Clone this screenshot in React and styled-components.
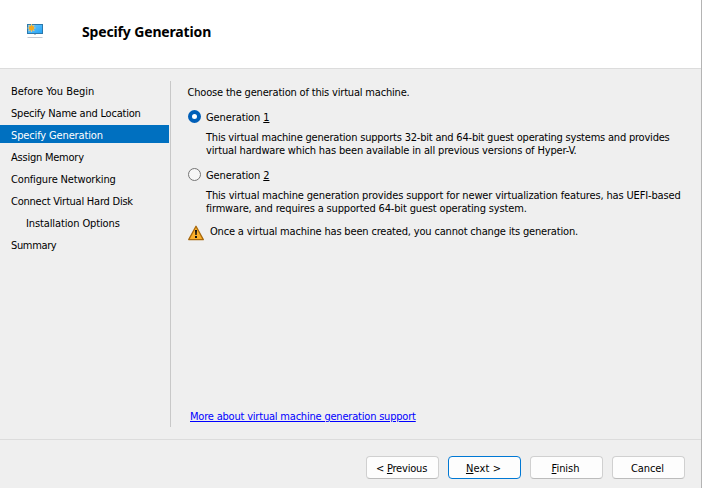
import React from "react";
import styled, { createGlobalStyle } from "styled-components";

const GlobalStyle = createGlobalStyle`
  *, *::before, *::after { box-sizing: border-box; }
  body {
    margin: 0;
    background: #efefef;
    color: #000;
    font-family: "DejaVu Sans Condensed", "Noto Sans", sans-serif;
    font-size: 11px;
    line-height: 13px;
  }
`;

const Wizard = styled.div`
  width: 702px;
  height: 488px;
  display: flex;
  flex-direction: column;
  background: #efefef;
  border-right: 1px solid #b4b4b4;
  overflow: hidden;
`;

const Header = styled.header`
  flex: none;
  height: 69px;
  display: flex;
  padding: 23px 0 0 27px;
  background: #fff;
  border-bottom: 1px solid #dcdcdc;
`;

const Title = styled.h1`
  margin: 0 0 0 38px;
  font-family: "Noto Sans", sans-serif;
  font-size: 14px;
  line-height: 18px;
  font-weight: 700;
  letter-spacing: -0.15px;
`;

const Body = styled.div`
  flex: none;
  height: 370px;
  display: flex;
  padding: 12px 0;
`;

const Sidebar = styled.nav`
  flex: none;
  width: 171px;
  height: 346px;
  display: flex;
  flex-direction: column;
  gap: 4px;
  padding-right: 1px;
  border-right: 1px solid #c8c8c8;
`;

const Step = styled.a`
  height: 18px;
  line-height: 22px;
  padding-left: ${(p) => (p.$nested ? 26 : 11)}px;
  white-space: nowrap;
  color: ${(p) => (p.$active ? "#fff" : "#000")};
  background: ${(p) => (p.$active ? "#0070c0" : "transparent")};
  letter-spacing: ${(p) => p.$track}px;
`;

const Content = styled.main`
  flex: 1;
  display: flex;
  flex-direction: column;
  align-items: flex-start;
  padding: 5px 0 0 17px;
`;

const Line = styled.span`
  display: block;
  white-space: nowrap;
  letter-spacing: ${(p) => p.$track}px;
`;

const Intro = styled(Line)`
  margin-left: -0.5px;
`;

const Option = styled.label`
  display: flex;
  align-items: flex-start;
  gap: 5px;
  margin-top: 11px;
`;

const Radio = styled.span`
  flex: none;
  width: 13px;
  height: 13px;
  border-radius: 50%;
  background: ${(p) => (p.$checked ? "#fff" : "#f6f6f6")};
  border: ${(p) => (p.$checked ? "4px solid #005fb8" : "1px solid #757575")};
`;

const OptionLabel = styled(Line)`
  margin-top: 1px;
`;

const Description = styled.p`
  margin: 7px 0 0 18px;
`;

const Notice = styled.div`
  display: flex;
  gap: 6px;
  margin-top: 10px;
`;

const Key = styled.span`
  text-decoration: underline;
  text-decoration-thickness: 1px;
  text-underline-offset: 1px;
`;

const HelpLink = styled.a`
  margin: auto 0 4px 2px;
  color: #0000ff;
  text-decoration: underline;
  text-decoration-thickness: 1px;
  text-underline-offset: 1px;
  letter-spacing: -0.2px;
  white-space: nowrap;
`;

const Footer = styled.footer`
  flex: 1;
  display: flex;
  justify-content: flex-end;
  gap: 9px;
  padding: 16px 16px 0 0;
  border-top: 1px solid #dcdcdc;
`;

const Button = styled.button`
  width: 73px;
  height: 23px;
  padding: 1px 2px 0 0;
  font: inherit;
  color: #000;
  white-space: nowrap;
  letter-spacing: ${(p) => p.$track}px;
  background: #fdfdfd;
  border: 1px solid ${(p) => (p.$primary ? "#0078d4" : "#d0d0d0")};
  border-bottom-color: ${(p) => (p.$primary ? "#0078d4" : "#bcbcbc")};
  border-radius: 4px;
`;

const steps = [
  { label: "Before You Begin", track: -0.03 },
  { label: "Specify Name and Location", track: -0.22 },
  { label: "Specify Generation", track: -0.14 },
  { label: "Assign Memory", track: -0.23 },
  { label: "Configure Networking", track: -0.15 },
  { label: "Connect Virtual Hard Disk", track: -0.23 },
  { label: "Installation Options", track: -0.12, nested: true },
  { label: "Summary", track: -0.35 },
];

const activeStep = "Specify Generation";

const generations = [
  {
    number: 1,
    checked: true,
    lines: [
      ["This virtual machine generation supports 32-bit and 64-bit guest operating systems and provides", -0.206],
      ["virtual hardware which has been available in all previous versions of Hyper-V.", -0.156],
    ],
  },
  {
    number: 2,
    checked: false,
    lines: [
      ["This virtual machine generation provides support for newer virtualization features, has UEFI-based", -0.147],
      ["firmware, and requires a supported 64-bit guest operating system.", -0.157],
    ],
  },
];

const MachineIcon = () => (
  <svg width="17" height="16" viewBox="0 0 17 16">
    <defs>
      <linearGradient id="screen" x1="0" y1="0" x2="1" y2="1">
        <stop offset="0" stopColor="#7cc8f8" />
        <stop offset="0.5" stopColor="#49b6fa" />
        <stop offset="1" stopColor="#22a2f4" />
      </linearGradient>
    </defs>
    <rect x="0.5" y="1.5" width="15" height="9" fill="url(#screen)" stroke="#2c79ac" />
    <rect x="7" y="11" width="2" height="1" fill="#b9c4cc" />
    <rect x="0.5" y="14" width="15" height="1" fill="#c3c9d2" />
    <path d="M4.5 1v8M.5 5h8M1.7 2.2l5.6 5.6M7.3 2.2L1.7 7.8" stroke="#ecc878" strokeWidth="1.1" />
    <circle cx="4.5" cy="5" r="2.5" fill="#f5a81c" />
  </svg>
);

const WarningIcon = () => (
  <svg width="16" height="16" viewBox="0 0 16 16">
    <path d="M8 1.2L15.3 14.6H.7z" fill="#fbb02c" stroke="#a8680c" strokeWidth="1.3" strokeLinejoin="round" />
    <path d="M7 5h2l-.3 5H7.3z" fill="#111" />
    <rect x="7" y="11" width="2" height="2" fill="#111" />
  </svg>
);

export default function App() {
  return (
    <>
      <GlobalStyle />
      <Wizard>
        <Header>
          <MachineIcon />
          <Title>Specify Generation</Title>
        </Header>
        <Body>
          <Sidebar>
            {steps.map((s) => (
              <Step key={s.label} $track={s.track} $active={s.label === activeStep} $nested={s.nested}>
                {s.label}
              </Step>
            ))}
          </Sidebar>
          <Content>
            <Intro $track={-0.18}>Choose the generation of this virtual machine.</Intro>
            {generations.map((g) => (
              <React.Fragment key={g.number}>
                <Option>
                  <Radio $checked={g.checked} />
                  <OptionLabel $track={-0.1}>
                    Generation <Key>{g.number}</Key>
                  </OptionLabel>
                </Option>
                <Description>
                  {g.lines.map(([text, track]) => (
                    <Line key={text} $track={track}>{text}</Line>
                  ))}
                </Description>
              </React.Fragment>
            ))}
            <Notice>
              <WarningIcon />
              <Line $track={-0.173}>
                Once a virtual machine has been created, you cannot change its generation.
              </Line>
            </Notice>
            <HelpLink>More about virtual machine generation support</HelpLink>
          </Content>
        </Body>
        <Footer>
          <Button $track={-0.2}>&lt; <Key>P</Key>revious</Button>
          <Button $track={0.1} $primary><Key>N</Key>ext &gt;</Button>
          <Button $track={-0.05}><Key>F</Key>inish</Button>
          <Button $track={-0.1}>Cancel</Button>
        </Footer>
      </Wizard>
    </>
  );
}
